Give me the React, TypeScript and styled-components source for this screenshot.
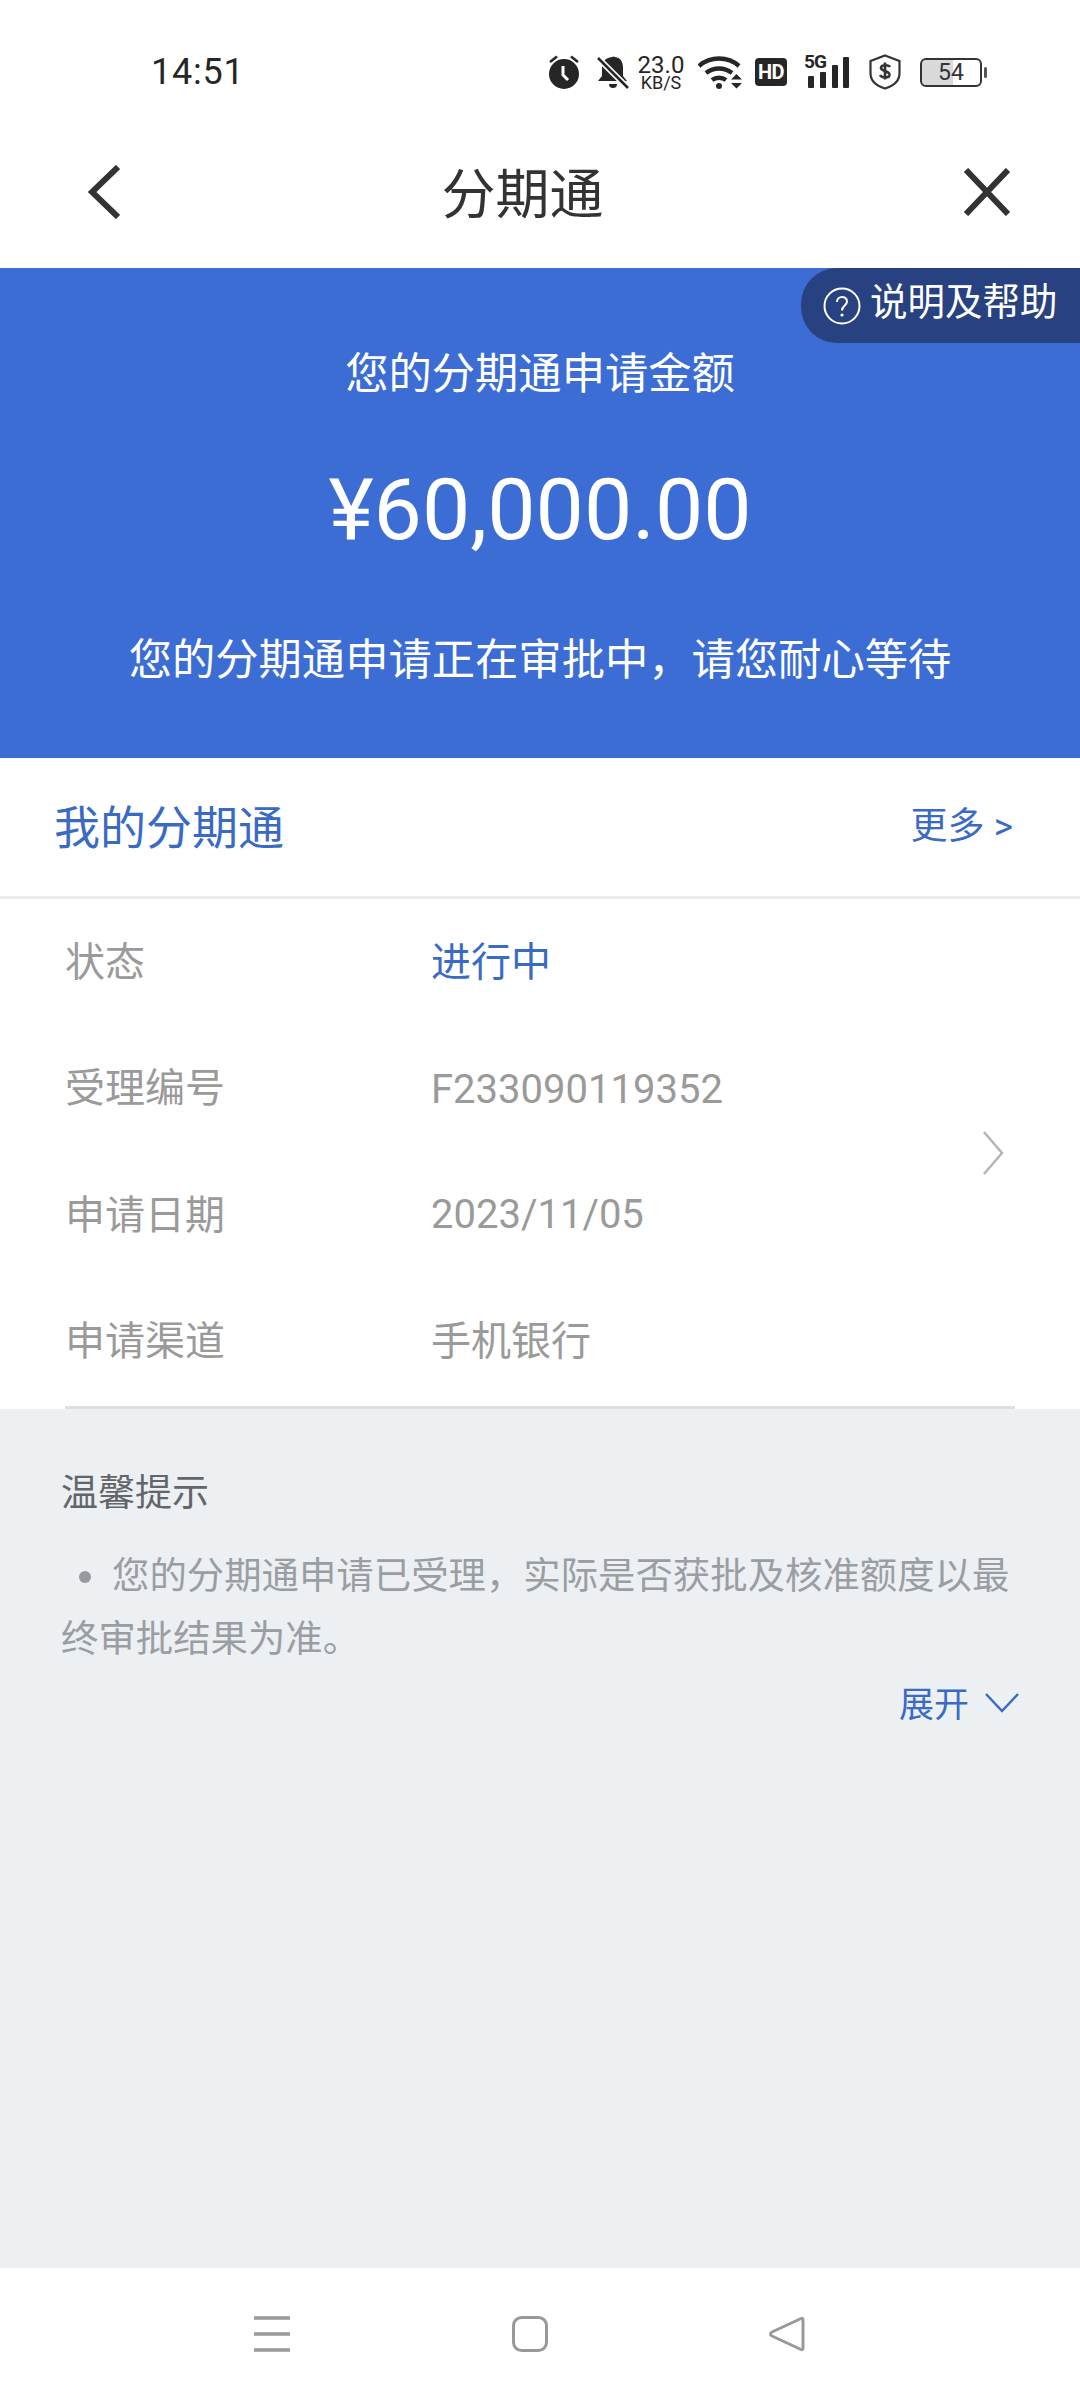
import React from "react";
import styled, { createGlobalStyle } from "styled-components";

const GlobalStyle = createGlobalStyle`
  html, body {
    margin: 0;
    padding: 0;
    background: #ffffff;
  }
  * {
    box-sizing: border-box;
  }
`;

const Page = styled.div`
  width: 1080px;
  height: 2400px;
  display: flex;
  flex-direction: column;
  overflow: hidden;
  background: #ffffff;
  font-family: Roboto, "Noto Sans CJK SC", sans-serif;
`;

const StatusBar = styled.div`
  height: 115px;
  flex: none;
  padding: 29px 92px 0 151px;
  display: flex;
  align-items: center;
  justify-content: space-between;
  color: #262626;
`;

const Clock = styled.span`
  font-size: 36px;
  font-weight: 400;
  letter-spacing: 0.8px;
`;

const StatusIcons = styled.div`
  display: flex;
  align-items: center;
  gap: 12px;
`;

const Speed = styled.div`
  width: 50px;
  margin-left: -5px;
  display: flex;
  flex-direction: column;
  align-items: center;
`;

const SpeedValue = styled.span`
  font-size: 24px;
  line-height: 21px;
  height: 21px;
`;

const SpeedUnit = styled.span`
  font-size: 18px;
  line-height: 14px;
  height: 14px;
`;

const HdBadge = styled.span`
  width: 32px;
  height: 28px;
  background: #262626;
  border-radius: 4px;
  color: #ffffff;
  font-size: 20px;
  font-weight: 700;
  line-height: 28px;
  text-align: center;
  letter-spacing: -0.5px;
`;

const Signal = styled.div`
  position: relative;
  width: 46px;
  height: 34px;
  margin-left: 5px;
`;

const SignalLabel = styled.span`
  position: absolute;
  left: 0;
  top: -3px;
  font-size: 19px;
  line-height: 20px;
  font-weight: 700;
  letter-spacing: -1px;
`;

const Battery = styled.div`
  position: relative;
  width: 62px;
  height: 29px;
  margin-left: 7px;
  margin-right: 6px;
  border: 2px solid #333333;
  border-radius: 6px;
  font-size: 23px;
  line-height: 25px;
  text-align: center;
  color: #333333;
  background: linear-gradient(to right, #d9d9d9 54%, #ffffff 54%);
  background-clip: padding-box;

  &::after {
    content: "";
    position: absolute;
    right: -7px;
    top: 7px;
    width: 3px;
    height: 11px;
    border-radius: 2px;
    background: #555555;
  }
`;

const NavBar = styled.div`
  height: 153px;
  flex: none;
  padding: 0 69px 0 88px;
  display: flex;
  align-items: center;
  justify-content: space-between;
`;

const NavTitle = styled.div`
  margin-right: 38px;
  font-size: 54px;
  color: #333333;
  position: relative;
  top: -1px;
`;

const Hero = styled.div`
  position: relative;
  height: 490px;
  flex: none;
  padding-top: 75px;
  display: flex;
  flex-direction: column;
  align-items: center;
  background: #3c6dd4;
  color: #ffffff;
`;

const HelpPill = styled.div`
  position: absolute;
  top: 0;
  right: 0;
  width: 279px;
  height: 75px;
  padding-left: 22px;
  display: flex;
  align-items: center;
  gap: 9px;
  background: #284180;
  border-radius: 36px 0 0 36px;
  font-size: 37.5px;
  line-height: 69px;
`;

const HelpText = styled.span`
  position: relative;
  top: -3px;
`;

const HeroCaption = styled.div`
  font-size: 43.3px;
  line-height: 64px;
`;

const Amount = styled.div`
  margin-top: 53px;
  font-size: 86px;
  line-height: 100px;
`;

const HeroStatus = styled.div`
  margin-top: 69px;
  font-size: 43.3px;
  line-height: 64px;
`;

const SectionHead = styled.div`
  height: 141px;
  flex: none;
  padding: 0 67px 7px 54px;
  display: flex;
  align-items: center;
  justify-content: space-between;
  border-bottom: 3px solid #ededed;
  color: #3a6bc4;
`;

const SectionTitle = styled.div`
  font-size: 46px;
`;

const MoreLink = styled.div`
  font-size: 37px;
  position: relative;
  top: -1px;
`;

const Detail = styled.div`
  height: 510px;
  flex: none;
  padding: 0 65px 3px;
  display: flex;
  align-items: center;
  justify-content: space-between;
  position: relative;

  &::after {
    content: "";
    position: absolute;
    left: 65px;
    right: 65px;
    bottom: 0;
    height: 3px;
    background: #dfdfdf;
  }
`;

const Rows = styled.div`
  display: flex;
  flex-direction: column;
`;

const Row = styled.div`
  height: 126.5px;
  display: flex;
  align-items: center;
  font-size: 40px;
`;

const RowLabel = styled.span`
  width: 366px;
  color: #9a9a9a;
  position: relative;
  top: -4px;
`;

const RowValue = styled.span<{ $accent?: boolean; $lift: number }>`
  color: ${(p) => (p.$accent ? "#3a6bc4" : "#9a9a9a")};
  position: relative;
  top: ${(p) => -p.$lift}px;
`;

const Tips = styled.div`
  flex: 1;
  padding: 54px 50px 0 61px;
  background: #ecf0f3;
`;

const TipsTitle = styled.div`
  font-size: 37px;
  line-height: 62px;
  color: #62666b;
`;

const TipsBody = styled.p`
  margin: 20px 0 0;
  font-size: 37.4px;
  line-height: 63px;
  color: #9a9ea3;
`;

const Bullet = styled.span`
  display: inline-block;
  width: 12px;
  height: 12px;
  margin: 0 21px 5px 18px;
  border-radius: 50%;
  background: #96999d;
  vertical-align: middle;
`;

const Expand = styled.div`
  margin-top: 10px;
  padding-right: 11px;
  display: flex;
  align-items: center;
  justify-content: flex-end;
  gap: 16px;
  font-size: 35px;
  line-height: 50px;
  color: #3a6bc4;
`;

const ExpandChevron = styled.svg`
  position: relative;
  top: -3px;
`;

const BottomBar = styled.div`
  height: 132px;
  flex: none;
  padding: 0 275px 0 254px;
  display: flex;
  align-items: center;
  justify-content: space-between;
  background: #ffffff;
`;

const rows = [
  { label: "状态", value: "进行中", accent: true, lift: 4 },
  { label: "受理编号", value: "F233090119352", lift: 0 },
  { label: "申请日期", value: "2023/11/05", lift: 1 },
  { label: "申请渠道", value: "手机银行", lift: 4 },
];

export default function App() {
  return (
    <Page>
      <GlobalStyle />
      <StatusBar>
        <Clock>14:51</Clock>
        <StatusIcons>
          <svg width="32" height="34" viewBox="0 0 32 34">
            <circle cx="16" cy="19" r="15" fill="#262626" />
            <path d="M2 7 9 1.500M30 7l-7-5.500" stroke="#262626" strokeWidth="2.500" fill="none" />
            <path d="M15 11v9l5 5" stroke="#fff" strokeWidth="3" fill="none" />
          </svg>
          <svg width="32" height="34" viewBox="0 0 32 34" style={{ marginLeft: 5 }}>
            <path d="M15 2a2.500 2.500 0 0 1 3 0c6 1 8 5 8 11v8l4 5H1l4-5v-8c0-6 3-10 10-11Z" fill="#262626" />
            <path d="M12 29h8a4 4 0 0 1-8 0Z" fill="#262626" />
            <path d="M1 3l30 30" stroke="#fff" strokeWidth="6" />
            <path d="M1 3l30 30" stroke="#262626" strokeWidth="2.500" />
          </svg>
          <Speed>
            <SpeedValue>23.0</SpeedValue>
            <SpeedUnit>KB/S</SpeedUnit>
          </Speed>
          <svg width="45" height="34" viewBox="0 0 45 34">
            <path d="M1 11C12 1 30 1 41 11" stroke="#262626" strokeWidth="4.500" fill="none" />
            <path d="M8 18c8-6 18-6 26 0" stroke="#262626" strokeWidth="4.500" fill="none" />
            <path d="M14 25c4-3 10-3 14 0" stroke="#262626" strokeWidth="4.500" fill="none" />
            <circle cx="21" cy="31" r="3" fill="#262626" />
            <path d="M33 24.500 38.500 19l5.500 5.500ZM33 28l5.500 5.500L44 28Z" fill="#262626" />
          </svg>
          <HdBadge>HD</HdBadge>
          <Signal>
            <SignalLabel>5G</SignalLabel>
            <svg width="46" height="34" viewBox="0 0 46 34">
              <rect x="4" y="21" width="6" height="12" rx="1" fill="#262626" />
              <rect x="16" y="17" width="6" height="16" rx="1" fill="#262626" />
              <rect x="28" y="10" width="6" height="23" rx="1" fill="#262626" />
              <rect x="39" y="2" width="6" height="31" rx="1" fill="#262626" />
            </svg>
          </Signal>
          <svg width="32" height="36" viewBox="0 0 32 36" style={{ marginLeft: 7 }}>
            <path d="M16 1.500 30.500 7v12c0 8-6 13-14.500 15.500C7.500 32 1.500 27 1.500 19V7Z" stroke="#333" strokeWidth="2.200" fill="none" />
            <path d="M21 13c-1-2-8-3-9 .5-1 4 9 3 8.500 7.500-.5 3.500-8 3-9.500 0M16 8.500v17" stroke="#333" strokeWidth="2.600" fill="none" />
          </svg>
          <Battery>54</Battery>
        </StatusIcons>
      </StatusBar>

      <NavBar>
        <svg width="32" height="54" viewBox="0 0 32 54">
          <path d="M30 2 4 27l26 25" stroke="#333" strokeWidth="6" fill="none" />
        </svg>
        <NavTitle>分期通</NavTitle>
        <svg width="48" height="48" viewBox="0 0 48 48">
          <path d="M3 2l42 44M45 2 3 46" stroke="#333" strokeWidth="6" fill="none" />
        </svg>
      </NavBar>

      <Hero>
        <HelpPill>
          <svg width="38" height="38" viewBox="0 0 38 38">
            <circle cx="19" cy="19" r="17.500" stroke="#fff" strokeWidth="2" fill="none" />
            <path d="M14 15c0-6.500 10-6.500 10-.5 0 4-5 4-5 9" stroke="#fff" strokeWidth="2" fill="none" />
            <circle cx="19" cy="28" r="1.600" fill="#fff" />
          </svg>
          <HelpText>说明及帮助</HelpText>
        </HelpPill>
        <HeroCaption>您的分期通申请金额</HeroCaption>
        <Amount>¥60,000.00</Amount>
        <HeroStatus>您的分期通申请正在审批中，请您耐心等待</HeroStatus>
      </Hero>

      <SectionHead>
        <SectionTitle>我的分期通</SectionTitle>
        <MoreLink>更多 &gt;</MoreLink>
      </SectionHead>

      <Detail>
        <Rows>
          {rows.map((row) => (
            <Row key={row.label}>
              <RowLabel>{row.label}</RowLabel>
              <RowValue $accent={row.accent} $lift={row.lift}>{row.value}</RowValue>
            </Row>
          ))}
        </Rows>
        <svg width="22" height="44" viewBox="0 0 22 44" style={{ marginRight: 11 }}>
          <path d="M2 1l18 21L2 43" stroke="#b5b5b5" strokeWidth="2.500" fill="none" />
        </svg>
      </Detail>

      <Tips>
        <TipsTitle>温馨提示</TipsTitle>
        <TipsBody>
          <Bullet />
          您的分期通申请已受理，实际是否获批及核准额度以最终审批结果为准。
        </TipsBody>
        <Expand>
          展开
          <ExpandChevron width="34" height="20" viewBox="0 0 34 20">
            <path d="M1 1l16 17L33 1" stroke="#3a6bc4" strokeWidth="2.500" fill="none" />
          </ExpandChevron>
        </Expand>
      </Tips>

      <BottomBar>
        <svg width="36" height="36" viewBox="0 0 36 36">
          <path d="M0 2h36M0 18h36M0 34h36" stroke="#999" strokeWidth="3.500" />
        </svg>
        <svg width="36" height="36" viewBox="0 0 36 36">
          <rect x="1.500" y="1.500" width="33" height="33" rx="8" stroke="#999" strokeWidth="3" fill="none" />
        </svg>
        <svg width="36" height="36" viewBox="0 0 36 36">
          <path d="M32 2.500c1-.5 2 0 2 1.500v28c0 1.500-1 2-2 1.500L3 20c-2-1-2-3 0-4Z" stroke="#999" strokeWidth="3" fill="none" />
        </svg>
      </BottomBar>
    </Page>
  );
}
